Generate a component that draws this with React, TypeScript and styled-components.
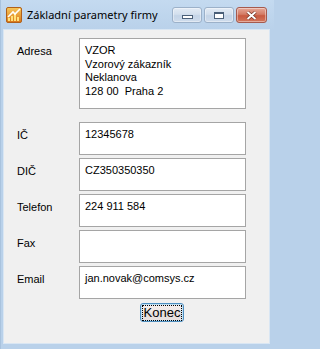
import styled, { createGlobalStyle } from 'styled-components';

const GlobalStyle = createGlobalStyle`
    html, body {
        margin: 0;
        padding: 0;
        background: #b9d1ea;
    }
`;

interface Field {
    label: string;
    lines: Array<string>;
    tall?: boolean;
}

const fields: Array<Field> = [
    {label: 'Adresa', lines: ['VZOR', 'Vzorový zákazník', 'Neklanova', '128 00  Praha 2'], tall: true},
    {label: 'IČ', lines: ['12345678']},
    {label: 'DIČ', lines: ['CZ350350350']},
    {label: 'Telefon', lines: ['224 911 584']},
    {label: 'Fax', lines: []},
    {label: 'Email', lines: ['jan.novak@comsys.cz']},
];

const Window = styled.div`
    width: 274px;
    height: 349px;
    box-sizing: border-box;
    display: flex;
    flex-direction: column;
    background: linear-gradient(to bottom, #c4daf0 0px, #b9d1ea 30px, #b9d1ea 100%);
    border-left: 1px solid #a9c3de;
    font-family: 'Liberation Sans', Arial, sans-serif;
`;

const TitleBar = styled.div`
    height: 30px;
    flex-shrink: 0;
    display: flex;
    align-items: flex-start;
    padding: 0 7px 0 5px;
`;

const TitleIcon = styled.svg`
    width: 16px;
    height: 16px;
    margin-top: 7px;
    flex-shrink: 0;
`;

const Title = styled.div`
    margin: 7px 0 0 5px;
    font-family: 'Noto Sans', 'Open Sans', sans-serif;
    font-size: 11px;
    line-height: 16px;
    color: #000;
    flex: 1;
    white-space: nowrap;
`;

const Caption = styled.div`
    display: flex;
    gap: 2px;
    margin-top: 7px;
`;

const CaptionButton = styled.div<{close?: boolean}>`
    width: ${props => (props.close ? 31 : 30)}px;
    height: 16px;
    box-sizing: border-box;
    border: 1px solid ${props => (props.close ? '#a55a4e' : '#9cb1c9')};
    border-radius: 3px;
    display: flex;
    align-items: center;
    justify-content: center;
    background: ${props =>
        props.close
            ? 'linear-gradient(to bottom, #e6a898 0%, #d47c66 45%, #c85a41 55%, #d3765c 100%)'
            : 'linear-gradient(to bottom, #e3ebf5 0%, #d3dfed 45%, #c4d4e7 55%, #cfdcec 100%)'};
    box-shadow: inset 0 0 0 1px rgba(255, 255, 255, 0.4);
`;

const MinGlyph = styled.div`
    width: 9px;
    height: 2px;
    margin-top: 4px;
    border: 1px solid #4a5f78;
    background: #fff;
`;

const MaxGlyph = styled.div`
    width: 8px;
    height: 4px;
    border: 1px solid #4a5f78;
    border-top-width: 2px;
    background: #fff;
`;

const Client = styled.div`
    flex: 1;
    margin: 0 5px 6px 3px;
    background: #f0f0f0;
    box-shadow: 0 0 0 1px #d9e6f3;
    display: grid;
    grid-template-columns: 62px 167px;
    grid-auto-rows: min-content;
    row-gap: 3px;
    padding: 8px 0 0 13px;
    align-content: start;
`;

const Label = styled.div`
    font-size: 11px;
    line-height: 13px;
    color: #000;
    padding-top: 7px;
`;

const TextBox = styled.div<{tall?: boolean}>`
    height: ${props => (props.tall ? 71 : 33)}px;
    box-sizing: border-box;
    background: #fff;
    border: 1px solid #a5a5a5;
    padding: 5px 0 0 5px;
    font-size: 11px;
    line-height: 13.7px;
    color: #000;
    white-space: pre;
`;

const Spacer = styled.div`
    grid-column: 1 / span 2;
    height: 7px;
`;

const ButtonRow = styled.div`
    grid-column: 2;
    display: flex;
    justify-content: center;
    padding: 1px 1px 0 0;
`;

const Button = styled.div`
    width: 44px;
    height: 19px;
    box-sizing: border-box;
    border: 1px solid #4f8fc0;
    border-radius: 3px;
    background: linear-gradient(to bottom, #f5efee 0%, #ede5e3 50%, #e4dbd9 51%, #ebe3e1 100%);
    box-shadow: inset 0 0 0 1px #bfe0f5;
    display: flex;
    align-items: center;
    justify-content: center;
`;

const Focus = styled.span`
    border: 1px dotted #000;
    padding: 0 1px;
    font-size: 13px;
    line-height: 14px;
    color: #000;
`;

export default function App() {
    return (
        <>
            <GlobalStyle />
            <Window>
                <TitleBar>
                    <TitleIcon viewBox="0 0 16 16">
                        <defs>
                            <linearGradient id="ico" x1="0" y1="0" x2="0" y2="1">
                                <stop offset="0" stopColor="#f7c85a" />
                                <stop offset="1" stopColor="#d9771a" />
                            </linearGradient>
                        </defs>
                        <rect x="0.5" y="0.5" width="15" height="15" rx="1.5" fill="url(#ico)" stroke="#b0601a" />
                        <rect x="2" y="11" width="2" height="3" fill="#ffe27a" />
                        <rect x="5" y="9" width="2" height="5" fill="#ffe27a" />
                        <rect x="8" y="7" width="2" height="7" fill="#ffe27a" />
                        <rect x="11" y="10" width="2" height="4" fill="#ffe27a" />
                        <path d="M2 10 L7 5 L9 7 L14 2" stroke="#fff" strokeWidth="1.6" fill="none" />
                    </TitleIcon>
                    <Title>Základní parametry firmy</Title>
                    <Caption>
                        <CaptionButton>
                            <MinGlyph />
                        </CaptionButton>
                        <CaptionButton>
                            <MaxGlyph />
                        </CaptionButton>
                        <CaptionButton close>
                            <svg width="11" height="9" viewBox="0 0 11 9">
                                <path d="M1.5 1 L9.5 8 M9.5 1 L1.5 8" stroke="#6a2a1c" strokeWidth="3.2" />
                                <path d="M1.5 1 L9.5 8 M9.5 1 L1.5 8" stroke="#fff" strokeWidth="2" />
                            </svg>
                        </CaptionButton>
                    </Caption>
                </TitleBar>
                <Client>
                    {fields.map((field, index) => (
                        <FieldRow key={index} field={field} index={index} />
                    ))}
                    <ButtonRow>
                        <Button>
                            <Focus>Konec</Focus>
                        </Button>
                    </ButtonRow>
                </Client>
            </Window>
        </>
    );
}

function FieldRow(props: {field: Field; index: number}) {
    const {field, index} = props;
    return (
        <>
            <Label>{field.label}</Label>
            <TextBox tall={field.tall}>{field.lines.join('\n')}</TextBox>
            {index === 0 && <Spacer />}
        </>
    );
}
